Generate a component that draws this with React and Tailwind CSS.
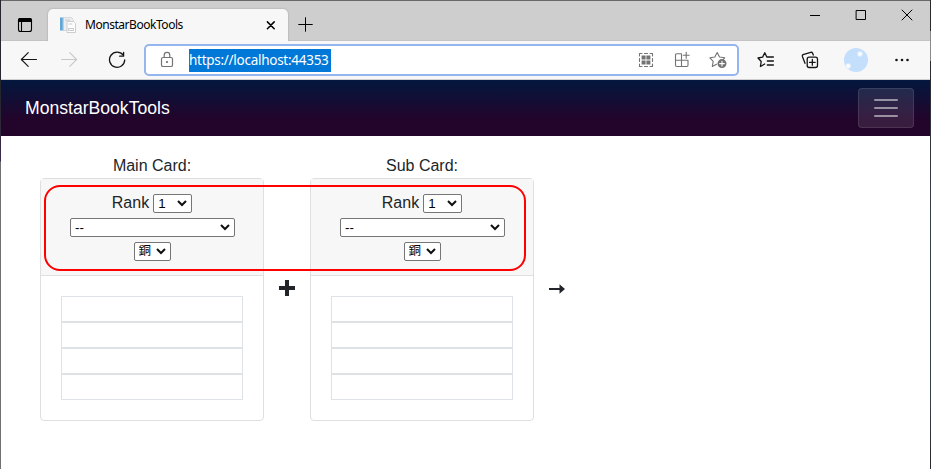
import React from "react";

const uiFont = "font-['Noto_Sans','Open_Sans',sans-serif]";

function Icon({ size = 18, className = "", children, sw = 1 }) {
  return (
    <svg
      width={size}
      height={size}
      viewBox={`0 0 ${size} ${size}`}
      fill="none"
      stroke="currentColor"
      strokeWidth={sw}
      strokeLinecap="round"
      strokeLinejoin="round"
      className={`block shrink-0 ${className}`}
    >
      {children}
    </svg>
  );
}

function TabStrip() {
  return (
    <div className="flex h-10 border-b border-[#c3c3c3] bg-[#cecece] text-black">
      <div className="flex w-[47px] shrink-0 items-center pt-2 pl-4">
        <Icon size={16} sw={1.1}>
          <rect x="1.5" y="1.5" width="13" height="13" rx="2" />
          <path d="M1.5 4.500V3.2Q1.500 1.500 3.2 1.500h9.6q1.700 0 1.700 1.700V4.500Z" fill="currentColor" />
          <path d="M4.500 5v9.2" />
        </Icon>
      </div>
      <div className="mt-2 -mb-px flex w-60 shrink-0 items-center rounded-t-[5px] bg-[#f7f7f7] pl-3 shadow-[0_0_2px_rgba(0,0,0,0.25)] [clip-path:inset(-3px_-3px_0_-3px)]">
        <svg width="16" height="16" viewBox="0 0 16 16" className="block shrink-0">
          <path d="M3.5.5h8l2 3v10h-10z" fill="#eceef0" stroke="#cfd2d5" strokeWidth=".8" />
          <path d="M0 .5h3.5v13H0z" fill="#62a7d5" />
          <path d="M2.7.5h1.2v13H2.7z" fill="#b7d8ec" />
          <path d="M7 4.5h6.5l2 2v9H7z" fill="#fff" stroke="#bfc3c7" strokeWidth=".8" />
          <path d="M8.5 7h4M8.5 11.5h5v2h-5zM5 3h5" fill="none" stroke="#b9bec3" strokeWidth=".8" />
        </svg>
        <span className={`ml-[9px] w-[181px] text-[12px] tracking-[-0.46px] ${uiFont}`}>MonstarBookTools</span>
        <Icon size={10} sw={1.5}>
          <path d="M1.4 1.900l6.800 6.800M8.200 1.900L1.400 8.700" />
        </Icon>
      </div>
      <div className="ml-2.5 flex items-center pt-2">
        <Icon size={15} sw={1}>
          <path d="M7.5.7v13.6M.7 7.5h13.6" />
        </Icon>
      </div>
      <div className="ml-auto flex items-start pt-2">
        <Icon size={12} className="mt-px mr-[34px]"><path d="M1 5.5h10" strokeLinecap="butt" /></Icon>
        <Icon size={12} className="mr-[34px]"><path d="M1.5 1.5h9v9h-9z" strokeLinejoin="miter" /></Icon>
        <Icon size={12} className="mr-[17px]"><path d="M1 1l10 10M11 1L1 11" /></Icon>
      </div>
    </div>
  );
}

function Toolbar() {
  return (
    <div className="flex h-[39px] items-center border-b border-[#cfcfcf] bg-[#f7f7f7] pl-[18px] text-[#151515]">
      <Icon size={18} sw={1.15}><path d="M17.500 8.500H2.500M9.200 1.700L2.400 8.500l6.800 6.800" /></Icon>
      <Icon size={18} className="ml-[23px] text-[#c8c8c8]" sw={1.15}><path d="M6 8.500M1.500 8.500h15M9.800 1.700l6.800 6.800-6.800 6.800" /></Icon>
      <Icon size={18} className="ml-[30px]" sw={1.3}>
        <path d="M15.2 4.2A7.6 7.6 0 1 0 16.7 9" />
        <path d="M15.6 1.3v3.9h-3.9" />
      </Icon>
      <div className="ml-[18px] flex h-8 w-[595px] shrink-0 items-center rounded-[5px] border-2 border-[#95b5ee] bg-white text-[#737373]">
        <Icon size={18} className="ml-3" sw={1.2}>
          <rect x="3.5" y="6.500" width="11" height="9" rx="1.6" />
          <path d="M6.200 6.300V4.2a2.8 2.8 0 0 1 5.6 0v2.100" />
          <circle cx="9" cy="11" r=".5" fill="currentColor" />
        </Icon>
        <span className={`ml-[13px] h-[23px] w-[142px] bg-[#0078d7] text-[13.5px] leading-[22px] tracking-[-0.27px] whitespace-nowrap text-white ${uiFont}`}>
          https://localhost:44353
        </span>
        <div className="ml-auto flex items-center gap-[18px] pr-2.5">
          <Icon size={18} sw={1.1}>
            <path d="M2.5 5V2.5H5M7.5 2.5h3M13 2.5h2.5V5M15.5 7.5v3M15.5 13v2.5H13M10.5 15.5h-3M5 15.5H2.5V13M2.5 10.5v-3" />
            <path d="M4.600 4.600h4v4h-4zM9.400 4.600h4v4h-4zM4.600 9.400h4v4h-4zM9.400 9.400h4v4h-4z" fill="currentColor" stroke="none" />
          </Icon>
          <Icon size={18} sw={1.1}>
            <path d="M8.5 2.8H3.7q-1.2 0-1.2 1.2v10.3q0 1.2 1.2 1.2h10.1q1.2 0 1.2-1.2V9.2H2.5M8.5 2.8v12.7M13.2 1.2v6M10.2 4.2h6" />
          </Icon>
          <Icon size={18} sw={1.1}>
            <path d="M7.5 13.2l-4.2 2.3.9-5.1L.9 6.8 5.8 6l2.4-4.5L10.5 6l5.2.8-2 2" />
            <circle cx="13" cy="12.6" r="4.5" fill="currentColor" stroke="none" />
            <path d="M13 10.2V15M10.6 12.6h4.8" stroke="#fff" />
          </Icon>
        </div>
      </div>
      <Icon size={18} className="ml-[18px]" sw={1.3}>
        <path d="M7.7 13l-4.3 2.5.8-5L1 7l4.6-.9L7.8 1.8 9.8 6h6.600M10.3 10h6.1M10.3 14h6.1" />
      </Icon>
      <Icon size={18} className="ml-[26px]" sw={1.3}>
        <path d="M4 12.3L1.4 5.4Q1 4.2 2 3.6L9.7 1.3q1.3-.3 1.8.8l.8 2" />
        <rect x="6.2" y="6.2" width="10.3" height="10.3" rx="2" />
        <path d="M11.35 8.5v5.7M8.5 11.35h5.7" />
      </Icon>
      <svg width="24" height="24" viewBox="0 0 24 24" className="ml-[25px] block shrink-0">
        <circle cx="12" cy="12" r="12" fill="#c3dffc" />
        <circle cx="16" cy="6" r="2.8" fill="#e1efff" />
        <circle cx="16" cy="6" r="1.7" fill="#fff" />
        <circle cx="4.2" cy="18" r="2.8" fill="#e1efff" />
        <circle cx="4.2" cy="18" r="1.7" fill="#fff" />
      </svg>
      <svg width="16" height="4" viewBox="0 0 16 4" fill="currentColor" className="ml-[26px] block shrink-0">
        <circle cx="2.5" cy="2" r="1.3" />
        <circle cx="8" cy="2" r="1.3" />
        <circle cx="13.5" cy="2" r="1.3" />
      </svg>
    </div>
  );
}

function NavBar() {
  return (
    <nav className="flex h-14 items-center justify-between bg-[linear-gradient(180deg,#03173e_0%,#23042b_70%)] pr-4 pl-6">
      <span className="text-[17.6px] leading-7 text-white">MonstarBookTools</span>
      <button className="flex h-10 w-14 items-center justify-center rounded border border-white/10 bg-white/10">
        <svg width="30" height="30" viewBox="0 0 30 30" stroke="white" strokeOpacity=".5" strokeWidth="2" strokeLinecap="round">
          <path d="M4 7h22M4 15h22M4 23h22" />
        </svg>
      </button>
    </nav>
  );
}

function Select({ label, className, textClass = "text-[13.333px]" }) {
  return (
    <span className={`relative inline-flex h-[19px] shrink-0 ${className}`}>
      <select className={`h-full w-full appearance-none rounded-[2px] border border-[#767676] bg-white pl-1 leading-none text-black outline-none ${textClass}`}>
        <option>{label}</option>
      </select>
      <svg
        width="10"
        height="7"
        viewBox="0 0 10 7"
        fill="none"
        stroke="#101010"
        strokeWidth="2"
        className="pointer-events-none absolute top-1.5 right-[5px]"
      >
        <path d="M1 1l4 4 4-4" />
      </svg>
    </span>
  );
}

function Card({ title }) {
  return (
    <section className="w-56">
      <div className="h-6 text-center leading-6">{title}</div>
      <div className="rounded border border-[#dfdfdf]">
        <div className="border-b border-[#dfdfdf] bg-[#f7f7f7] py-3">
          <div className="flex h-6 items-center justify-center gap-1">
            <span>Rank</span>
            <Select label="1" className="mt-px w-[39px]" />
          </div>
          <div className="flex h-6 items-center justify-center pl-px">
            <Select label="--" className="mt-px w-[165px]" />
          </div>
          <div className="flex h-6 items-center justify-center">
            <Select label="銅" className="mt-px w-[37px]" textClass="text-[12.5px]" />
          </div>
        </div>
        <div className="p-5">
          {[0, 1, 2, 3].map((row) => (
            <div key={row} className="h-[26px] border border-[#dee2e6]" />
          ))}
        </div>
      </div>
    </section>
  );
}

export default function App() {
  return (
    <div className="flex h-[469px] w-[931px] overflow-hidden font-['Liberation_Sans','Noto_Sans_CJK_JP',sans-serif] text-[16px] text-[#212529]">
      <div className="w-px shrink-0 bg-[linear-gradient(180deg,#26262d_0px,#26262d_100px,#3a2c4e_161px,#707070_162px)]" />
      <div className="relative w-[929px] shrink-0 border-t border-[#696969] bg-white">
        <TabStrip />
        <Toolbar />
        <NavBar />
        <main className="flex pt-[18px] pl-[39px]">
          <Card title="Main Card:" />
          <div className="flex w-[46px] justify-center pt-[126px]">
            <svg width="16" height="16" viewBox="0 0 16 16" className="block" fill="currentColor">
              <path d="M6 0h4v6h6v4h-6v6H6v-6H0V6h6z" />
            </svg>
          </div>
          <Card title="Sub Card:" />
          <svg width="16" height="10" viewBox="0 0 16 10" className="mt-[130px] ml-[15px] block" fill="currentColor">
            <path d="M0 4h10.5V.2L16 5l-5.5 4.8V6H0z" />
          </svg>
        </main>
        <div className="pointer-events-none absolute top-[184px] left-[43px] h-[86px] w-[482px] rounded-[16px] border-2 border-[#ff0000]" />
      </div>
      <div className="w-px shrink-0 bg-[linear-gradient(180deg,#2a2a2c_0px,#2a2a2c_31px,#8a8a8a_31px,#8a8a8a_61px,#2a2a30_61px,#34404c_220px,#34404c_400px,#2a2630_469px)]" />
    </div>
  );
}
